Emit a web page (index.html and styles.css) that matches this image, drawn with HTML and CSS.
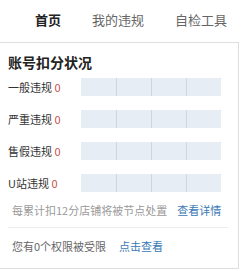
FILE: index.html
```html
<!DOCTYPE html>
<html lang="zh-CN">
<head>
<meta charset="utf-8">
<title>账号扣分状况</title>
<link rel="stylesheet" href="styles.css">
</head>
<body>
<nav class="tabs">
  <span class="tab active">首页</span>
  <span class="tab">我的违规</span>
  <span class="tab">自检工具</span>
</nav>
<section class="card">
  <h2 class="title">账号扣分状况</h2>
  <div class="rows">
    <div class="row">
      <span class="label">一般违规 <em class="num">0</em></span>
      <div class="bar"><i></i><i></i><i></i><i></i></div>
    </div>
    <div class="row">
      <span class="label">严重违规 <em class="num">0</em></span>
      <div class="bar"><i></i><i></i><i></i><i></i></div>
    </div>
    <div class="row">
      <span class="label">售假违规 <em class="num">0</em></span>
      <div class="bar"><i></i><i></i><i></i><i></i></div>
    </div>
    <div class="row">
      <span class="label">U站违规 <em class="num">0</em></span>
      <div class="bar"><i></i><i></i><i></i><i></i></div>
    </div>
  </div>
  <p class="note">每累计扣12分店铺将被节点处置<a class="link">查看详情</a></p>
  <hr class="divider">
  <p class="limit">您有0个权限被受限<a class="link">点击查看</a></p>
</section>
</body>
</html>
```
FILE: styles.css
```css
html, body {
  margin: 0;
  padding: 0;
  background: #fff;
}
body {
  font-family: "Noto Sans CJK SC", "Noto Sans", sans-serif;
  color: #333;
  width: 241px;
}
.tabs {
  display: flex;
  align-items: center;
  gap: 31px;
  height: 40px;
  padding-left: 35px;
  margin-bottom: 2px;
}
.tab {
  font-size: 13px;
  color: #666;
  line-height: 18px;
}
.tab.active {
  color: #222;
  font-weight: bold;
}
.card {
  width: 238px;
  height: 225px;
  border-top: 1px solid #dedede;
  border-right: 1px solid #dedede;
  border-bottom: 1px solid #dedede;
  box-sizing: content-box;
}
.title {
  margin: 0;
  padding: 9px 0 0 8px;
  font-size: 14px;
  line-height: 20px;
  font-weight: bold;
  color: #222;
}
.rows {
  display: flex;
  flex-direction: column;
  gap: 14px;
  margin-top: 6px;
  padding-left: 8px;
}
.row {
  display: flex;
  align-items: center;
  height: 18px;
}
.label {
  width: 73px;
  font-size: 11px;
  line-height: 18px;
  color: #333;
  white-space: nowrap;
}
.num {
  font-style: normal;
  color: #c9514a;
}
.bar {
  display: grid;
  grid-template-columns: repeat(4, 1fr);
  width: 140px;
  height: 18px;
  background: #e7edf4;
}
.bar i + i {
  border-left: 1px solid #cfd6df;
}
.note {
  margin: 10px 0 0;
  padding-left: 12px;
  font-size: 11px;
  line-height: 16px;
  color: #9a9a9a;
  white-space: nowrap;
}
.link {
  color: #3a78b5;
  margin-left: 10px;
}
.limit .link {
  margin-left: 13px;
}
.divider {
  border: 0;
  border-top: 1px solid #ececec;
  margin: 9px 10px 0 8px;
  height: 0;
}
.limit {
  margin: 10px 0 0;
  padding-left: 12px;
  font-size: 11px;
  line-height: 16px;
  color: #666;
  white-space: nowrap;
}
```
